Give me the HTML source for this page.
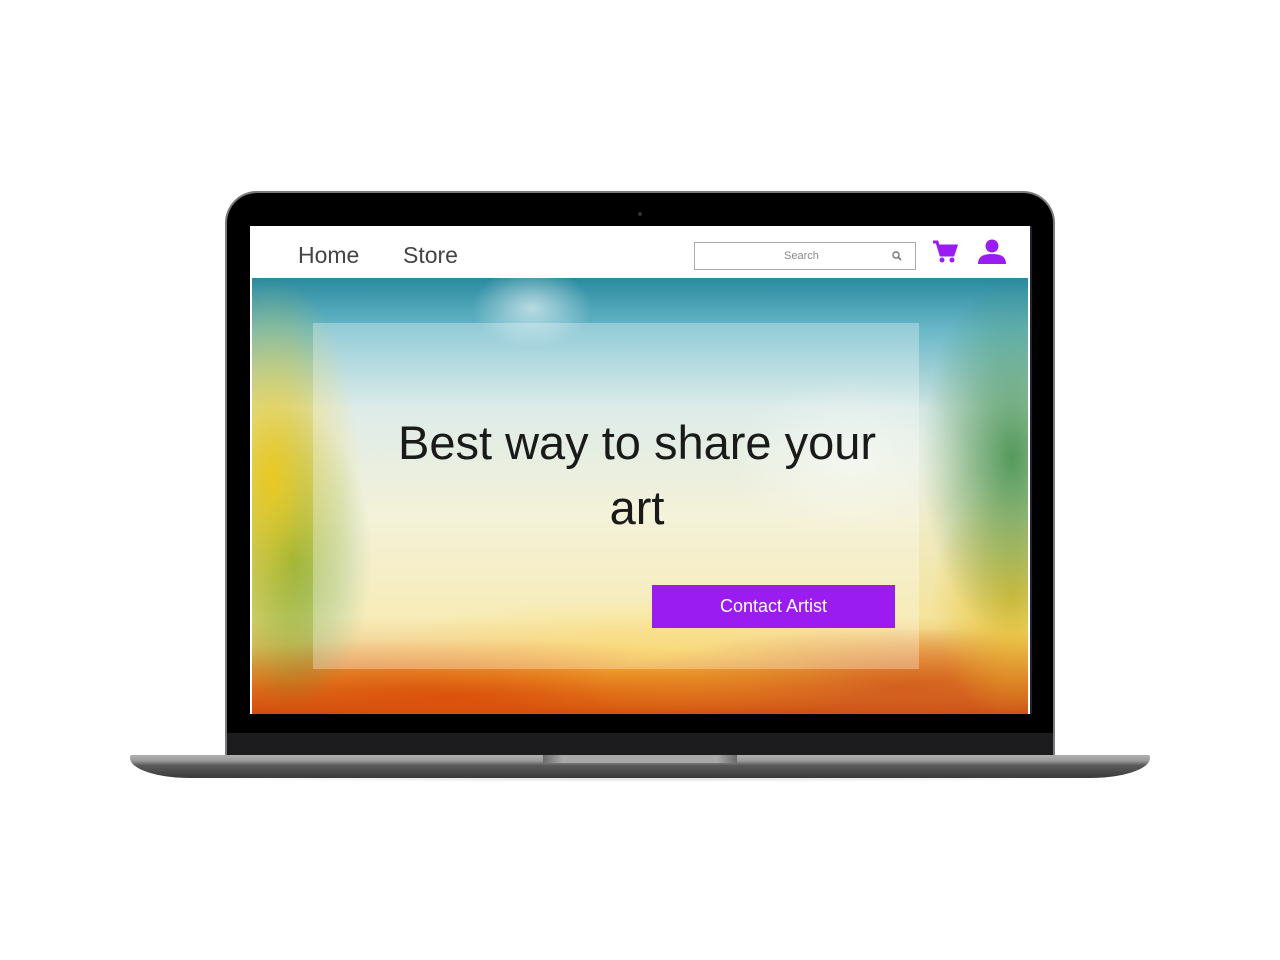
<!DOCTYPE html>
<html><head><style>
body{margin:0;width:1280px;height:960px;background:#fff;position:relative;overflow:hidden;font-family:"Liberation Sans",sans-serif}
.lid{position:absolute;left:225px;top:191px;width:830px;height:570px;background:#000;border-radius:32px 32px 0 0;border:2px solid #7a7a7a;border-bottom:none;box-sizing:border-box}
.chin{position:absolute;left:227px;top:733px;width:826px;height:24px;background:#1c1c1e}
.cam{position:absolute;left:638px;top:212px;width:4px;height:4px;border-radius:50%;background:#333}
.screen{position:absolute;left:250px;top:226px;width:780px;height:488px;background:#fff;overflow:hidden;border-right:2px solid #223}
.nav{position:absolute;left:0;top:0;width:780px;height:52px;background:#fff}
.nav a{position:absolute;top:16px;font-size:23px;color:#444}
.search{position:absolute;left:444px;top:16px;width:222px;height:28px;border:1px solid #aaa;box-sizing:border-box;font-size:11px;color:#888}
.hero{position:absolute;left:2px;top:52px;width:776px;height:436px;
background:
radial-gradient(ellipse 60px 40px at 280px 30px,rgba(255,255,255,.6),transparent),
radial-gradient(ellipse 120px 80px at 600px 180px,rgba(255,255,255,.5),transparent),
radial-gradient(ellipse 90px 200px at 20px 200px,rgba(240,200,20,.9),transparent),
radial-gradient(ellipse 80px 150px at 40px 280px,rgba(60,150,60,.8),transparent),
radial-gradient(ellipse 90px 180px at 760px 180px,rgba(60,140,70,.85),transparent),
radial-gradient(ellipse 80px 120px at 760px 320px,rgba(230,190,40,.85),transparent),
radial-gradient(ellipse 400px 60px at 200px 420px,rgba(220,80,10,.95),transparent),
radial-gradient(ellipse 300px 60px at 650px 410px,rgba(210,90,30,.9),transparent),
radial-gradient(ellipse 300px 60px at 400px 380px,rgba(250,210,60,.9),transparent),
linear-gradient(#2a8aa0 0%,#6ab8c8 12%,#cfe4e0 30%,#f0ecc8 55%,#f4e39a 78%,#e89830 92%,#c84a10 100%)}
.box{position:absolute;left:61px;top:45px;width:606px;height:346px;background:rgba(255,255,255,.3)}
.h{position:absolute;left:42px;width:606px;text-align:center;font-size:47px;color:#1a1a1a}
.btn{position:absolute;left:339px;top:262px;width:243px;height:43px;background:#9b1cf0;color:#fff;font-size:18px;text-align:center;line-height:43px}
.base{position:absolute;left:130px;top:755px;width:1020px;height:23px;background:linear-gradient(#b0b0b0 0,#9a9a9a 25%,#5a5a5a 45%,#3a3a3a 100%);border-radius:2px 2px 60px 60px/2px 2px 20px 20px}
.notch{position:absolute;left:543px;top:755px;width:194px;height:8px;background:linear-gradient(90deg,#6a6a6a,#a8a8a8 10%,#a8a8a8 90%,#6a6a6a)}
.shadow{position:absolute;left:160px;top:776px;width:960px;height:6px;background:radial-gradient(ellipse at center,rgba(0,0,0,.12),transparent 70%)}
</style></head><body>
<div class="lid"></div>
<div class="cam"></div>
<div class="chin"></div>
<div class="screen">
 <div class="nav">
  <a style="left:48px">Home</a><a style="left:153px">Store</a>
  <div class="search"><span style="position:absolute;left:89px;top:7px">Search</span>
   <svg style="position:absolute;left:197px;top:8px" width="10" height="10" viewBox="0 0 10 10"><circle cx="4" cy="4" r="3" fill="none" stroke="#777" stroke-width="1.4"/><path d="M6 6l3 3" stroke="#777" stroke-width="1.6"/></svg></div>
  <svg style="position:absolute;left:682px;top:14px" width="26" height="24" viewBox="0 0 26 24"><path d="M1 2h4l4 13h12l3-9H7" fill="none" stroke="#9b1cf0" stroke-width="3"/><rect x="8" y="6" width="14" height="8" fill="#9b1cf0"/><circle cx="10" cy="20" r="2.5" fill="#9b1cf0"/><circle cx="20" cy="20" r="2.5" fill="#9b1cf0"/></svg>
  <svg style="position:absolute;left:726px;top:13px" width="32" height="26" viewBox="0 0 32 26"><circle cx="16" cy="7" r="6.5" fill="#9b1cf0"/><path d="M2 25c0-8 6-10 14-10s14 2 14 10z" fill="#9b1cf0"/></svg>
 </div>
 <div class="hero">
  <div class="box">
   <div class="h" style="top:92px;left:0;padding-left:42px;box-sizing:border-box">Best way to share your</div>
   <div class="h" style="top:157px;left:0;padding-left:42px;box-sizing:border-box">art</div>
   <div class="btn">Contact Artist</div>
  </div>
 </div>
</div>
<div class="base"></div>
<div class="notch"></div>
<div class="shadow"></div>
</body></html>
